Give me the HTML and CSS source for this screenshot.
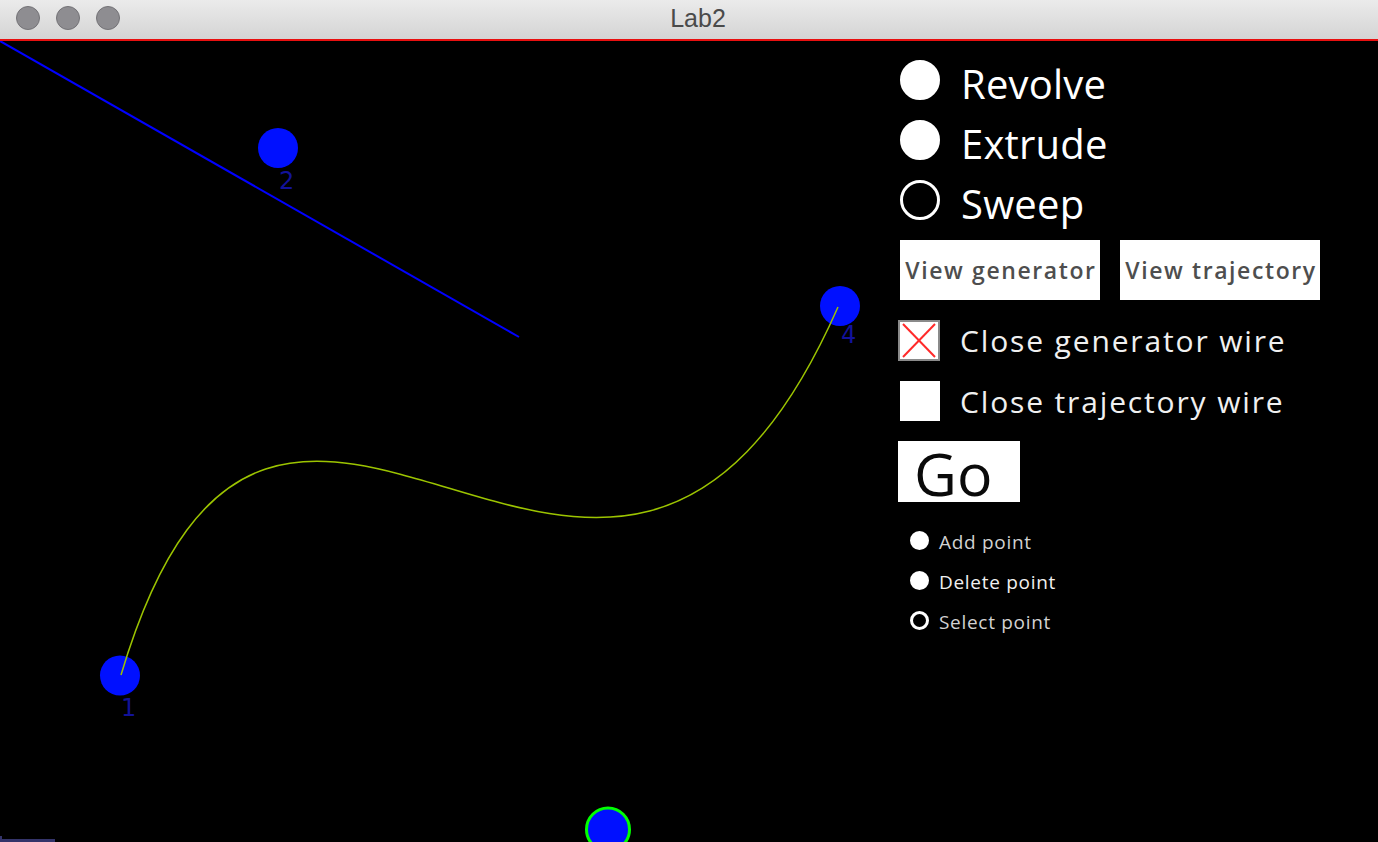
FILE: index.html
```html
<!DOCTYPE html>
<html>
<head>
<meta charset="utf-8">
<title>Lab2</title>
<link rel="stylesheet" href="styles.css">
</head>
<body>
<div class="window">
  <header class="titlebar">
    <div class="lights">
      <span class="light"></span><span class="light"></span><span class="light"></span>
    </div>
    <div class="title">Lab2</div>
    <div></div>
  </header>
  <main class="main">
    <svg class="canvas" width="880" height="801" viewBox="0 0 880 801">
      <line x1="0" y1="0" x2="519" y2="296" stroke="#0000ff" stroke-width="2"/>
      <circle cx="278" cy="107" r="20" fill="#0010ff"/>
      <text class="plabel" x="279" y="148">2</text>
      <circle cx="120" cy="634.5" r="20" fill="#0010ff"/>
      <text class="plabel" x="121" y="675">1</text>
      <circle cx="840" cy="265" r="20" fill="#0010ff"/>
      <text class="plabel" x="841" y="302">4</text>
      <circle cx="608" cy="788.5" r="21.5" fill="#0010ff" stroke="#00ff00" stroke-width="3"/>
      <path d="M121,634 C278,107 608,788 838,266" fill="none" stroke="#9cc400" stroke-width="1.5"/>
      <rect x="0" y="798" width="55" height="3" fill="#34346a"/>
      <rect x="0" y="795" width="2" height="3" fill="#34346a"/>
    </svg>
    <div class="panel">
      <div class="row big"><span class="radio on"></span><span class="label-big">Revolve</span></div>
      <div class="row big"><span class="radio on"></span><span class="label-big">Extrude</span></div>
      <div class="row big"><span class="radio"></span><span class="label-big">Sweep</span></div>
      <div class="buttons">
        <button class="btn">View generator</button>
        <button class="btn">View trajectory</button>
      </div>
      <div class="row check-row first">
        <span class="check checked">
          <svg width="38" height="37" viewBox="0 0 38 37"><line x1="3" y1="2" x2="35" y2="35" stroke="#ff2a2a" stroke-width="2"/><line x1="35" y1="2" x2="3" y2="35" stroke="#ff2a2a" stroke-width="2"/></svg>
        </span>
        <span class="label-check">Close generator wire</span>
      </div>
      <div class="row check-row"><span class="check"></span><span class="label-check">Close trajectory wire</span></div>
      <button class="go">Go</button>
      <div class="small-group">
        <div class="row small"><span class="sradio on"></span><span class="label-small">Add point</span></div>
        <div class="row small"><span class="sradio on"></span><span class="label-small bright">Delete point</span></div>
        <div class="row small"><span class="sradio"></span><span class="label-small">Select point</span></div>
      </div>
    </div>
  </main>
</div>
</body>
</html>
```

FILE: styles.css
```css
* { box-sizing: border-box; }
html, body { margin: 0; padding: 0; background: #000; }
body { width: 1378px; height: 842px; overflow: hidden; font-family: "Open Sans", "Liberation Sans", sans-serif; }

.window { width: 1378px; height: 842px; display: flex; flex-direction: column; }

.titlebar {
  height: 41px;
  flex: none;
  display: grid;
  grid-template-columns: 1fr auto 1fr;
  background: linear-gradient(#ebebeb, #d4d4d4);
  border-bottom: 2px solid #e81010;
}
.lights { display: flex; gap: 16px; padding: 6px 0 0 16px; align-items: flex-start; }
.light {
  width: 24px; height: 24px; border-radius: 50%;
  background: #8e8d91; border: 1px solid #747377;
}
.title {
  font-family: "Liberation Sans", Arial, sans-serif;
  font-size: 25px;
  color: #4a4a4a;
  line-height: 36px;
  padding-left: 18px;
}

.main {
  flex: 1;
  display: grid;
  grid-template-columns: 880px 1fr;
  background: #000;
  overflow: hidden;
}
.canvas { display: block; }
.plabel { font-family: "DejaVu Sans", sans-serif; font-size: 24px; fill: #12129a; }

.panel {
  padding: 19px 0 0 18px;
  display: flex;
  flex-direction: column;
  align-items: flex-start;
}
.row { display: flex; align-items: flex-start; }
.row.big { height: 40px; margin-bottom: 20px; }
.radio {
  width: 40px; height: 40px; border-radius: 50%;
  border: 3px solid #fff; background: #000; margin-left: 2px; flex: none;
}
.radio.on { background: #fff; }
.label-big {
  font-size: 40px; color: #fff; line-height: 40px;
  margin-left: 21px; margin-top: 4px; letter-spacing: 0.2px;
}

.buttons { display: flex; gap: 20px; margin-left: 2px; margin-bottom: 20px; }
.btn {
  width: 200px; height: 60px; background: #fff; border: none; padding: 0 0 0 2px;
  font-family: "Open Sans", sans-serif; font-weight: 600; font-size: 23px;
  letter-spacing: 1.6px; color: #4e4e4e;
}

.check-row { height: 40px; margin-bottom: 20px; }
.check-row.first { height: 41px; }
.check {
  width: 40px; height: 40px; background: #fff; margin-left: 2px; flex: none;
}
.check.checked {
  width: 42px; height: 41px; margin-left: 0; border: 2px solid #8a8a8a;
  display: flex; align-items: center; justify-content: center;
}
.check.checked svg { display: block; }
.label-check {
  font-size: 30px; color: #f0f0f0; line-height: 40px;
  letter-spacing: 1.85px; margin-left: 20px; margin-top: 1px;
}

.go {
  width: 122px; height: 61px; background: #fff; border: none;
  padding: 3px 0 0 16px; text-align: left;
  font-family: "Open Sans", sans-serif; font-size: 59px; line-height: 58px;
  color: #0a0a0a; margin-bottom: 29px;
}

.small-group { display: flex; flex-direction: column; gap: 20px; margin-left: 12px; }
.row.small { height: 20px; }
.sradio {
  width: 19px; height: 19px; border-radius: 50%; border: 3px solid #fff;
  background: #000; flex: none;
}
.sradio.on { background: #fff; }
.label-small {
  font-size: 19px; line-height: 20px; color: #d2d2d2; letter-spacing: 0.7px;
  margin-left: 10px; margin-top: 1px;
}
.label-small.bright { color: #f0f0f0; }
```
